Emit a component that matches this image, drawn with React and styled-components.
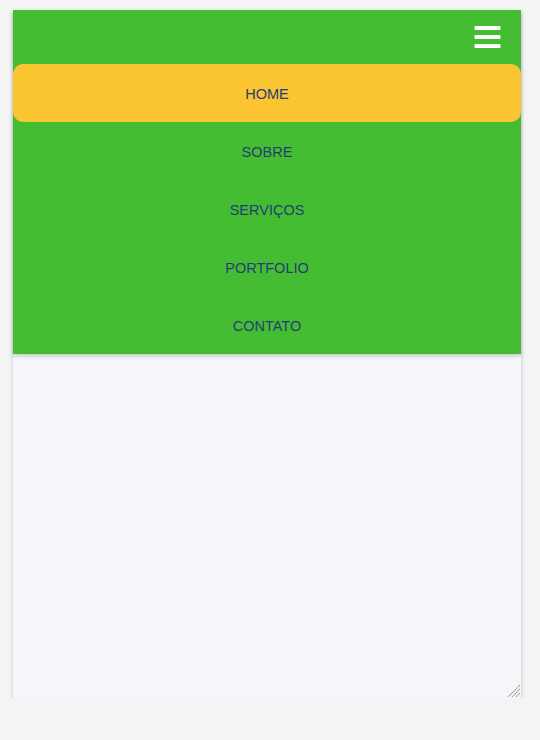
import React from "react";
import styled, { createGlobalStyle } from "styled-components";

const Global = createGlobalStyle`
  html, body { margin: 0; padding: 0; background: #f4f4f4; }
  body { font-family: "Liberation Sans", Arial, sans-serif; }
`;

const Frame = styled.div`
  position: relative;
  box-sizing: border-box;
  width: 508px;
  height: 688px;
  margin: 10px 0 0 13px;
  background: #f5f6fa;
  box-shadow: 0 2px 4px rgba(0, 0, 0, 0.2);
`;

const Grip = styled.svg`
  position: absolute;
  right: 1px;
  bottom: 1px;
  display: block;
`;

const Header = styled.header`
  background: #44bd32;
  box-shadow: 0 2px 4px rgba(0, 0, 0, 0.2);
`;

const TopBar = styled.div`
  height: 54px;
  display: flex;
  justify-content: flex-end;
  align-items: center;
  padding-right: 20px;
`;

const Burger = styled.button`
  border: 0;
  background: none;
  padding: 0;
  display: flex;
  margin-top: 1px;
  cursor: pointer;
`;

const Nav = styled.ul`
  list-style: none;
  margin: 0;
  padding: 0;
`;

const Item = styled.li`
  box-sizing: border-box;
  height: 58px;
  padding-top: 2px;
  display: flex;
  align-items: center;
  justify-content: center;
  font-size: 14.5px;
  color: #273c75;
  border-radius: 10px;
  background: ${(p) => (p.$active ? "#fbc531" : "transparent")};
`;

const items = ["HOME", "SOBRE", "SERVIÇOS", "PORTFOLIO", "CONTATO"];

export default function App() {
  return (
    <>
      <Global />
      <Frame>
        <Header>
          <TopBar>
            <Burger aria-label="menu">
              <svg width="27" height="23" viewBox="0 0 27 23">
                <rect x="0.5" y="0" width="26" height="4" rx="1" fill="#fff" />
                <rect x="0.5" y="9" width="26" height="4" rx="1" fill="#fff" />
                <rect x="0.5" y="18" width="26" height="4" rx="1" fill="#fff" />
              </svg>
            </Burger>
          </TopBar>
          <Nav>
            {items.map((t, i) => (
              <Item key={t} $active={i === 0}>
                {t}
              </Item>
            ))}
          </Nav>
        </Header>
        <Grip width="13" height="13" viewBox="0 0 13 13">
          <g stroke="#9c9c9c" strokeWidth="1.2" strokeDasharray="1.4 0.6">
            <line x1="13" y1="1" x2="1" y2="13" />
            <line x1="13" y1="5" x2="5" y2="13" />
            <line x1="13" y1="9" x2="9" y2="13" />
          </g>
        </Grip>
      </Frame>
    </>
  );
}
